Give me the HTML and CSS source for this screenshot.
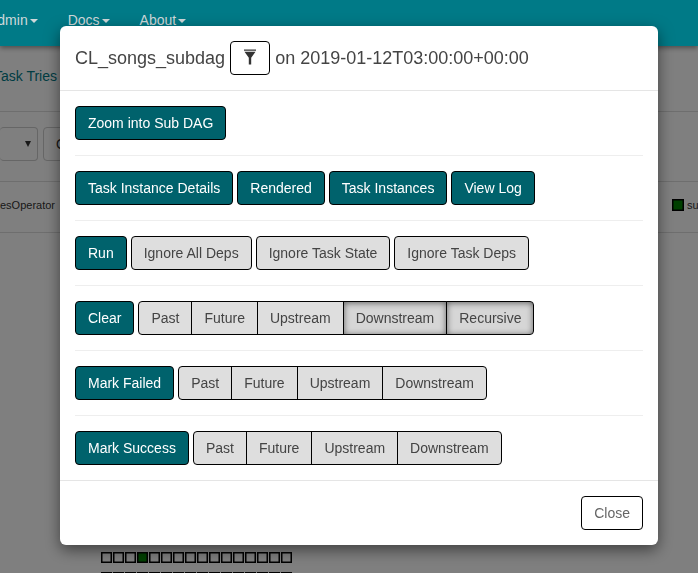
FILE: index.html
```html
<!DOCTYPE html>
<html lang="en-US">

<head>
    <meta charset="UTF-8">
    <meta name="viewport" content="width=device-width, initial-scale=1.0">
    <title>CL_songs_subdag</title>
    <link rel="stylesheet" href="styles.css">
</head>

<body>
    <nav class="navbar">
        <a class="nav-link nav-admin">Admin<span class="caret"></span></a>
        <a class="nav-link">Docs<span class="caret"></span></a>
        <a class="nav-link">About<span class="caret"></span></a>
    </nav>

    <div class="page">
        <div class="tabs"><a class="tab-link">Task Tries</a></div>
        <div class="toolbar">
            <div class="select-box"><span class="select-arrow"></span></div>
            <div class="input-box">O</div>
        </div>
        <div class="legend">
            <span class="operator">esOperator</span>
            <span class="legend-state"><span class="legend-swatch"></span>su</span>
        </div>
        <div class="squares">
            <span class="sq"></span><span class="sq"></span><span class="sq"></span><span class="sq sq-ok"></span><span class="sq"></span><span class="sq"></span><span class="sq"></span><span class="sq"></span><span class="sq"></span><span class="sq"></span><span class="sq"></span><span class="sq"></span><span class="sq"></span><span class="sq"></span><span class="sq"></span><span class="sq"></span>
        </div>
        <div class="squares">
            <span class="sq"></span><span class="sq"></span><span class="sq"></span><span class="sq"></span><span class="sq"></span><span class="sq"></span><span class="sq"></span><span class="sq"></span><span class="sq"></span><span class="sq"></span><span class="sq"></span><span class="sq"></span><span class="sq"></span><span class="sq"></span><span class="sq"></span><span class="sq"></span>
        </div>
    </div>

    <div class="backdrop"></div>

    <div class="modal">
        <div class="modal-header">
            <span>CL_songs_subdag</span>
            <button class="btn btn-filter">
                <svg width="12" height="18" viewBox="0 0 12 18"><path d="M0 .4h12v1.4H0z M.5 2.8h11L7.2 8.8v6.6H4.8V8.8z" fill="#333"/></svg>
            </button>
            <span>on 2019-01-12T03:00:00+00:00</span>
        </div>
        <div class="modal-body">
            <div class="row">
                <button class="btn btn-primary">Zoom into Sub DAG</button>
            </div>
            <hr>
            <div class="row">
                <button class="btn btn-primary">Task Instance Details</button>
                <button class="btn btn-primary">Rendered</button>
                <button class="btn btn-primary">Task Instances</button>
                <button class="btn btn-primary">View Log</button>
            </div>
            <hr>
            <div class="row">
                <button class="btn btn-primary">Run</button>
                <button class="btn btn-grey">Ignore All Deps</button>
                <button class="btn btn-grey">Ignore Task State</button>
                <button class="btn btn-grey">Ignore Task Deps</button>
            </div>
            <hr>
            <div class="row">
                <button class="btn btn-primary">Clear</button>
                <div class="btn-group">
                    <button class="btn btn-grey">Past</button>
                    <button class="btn btn-grey">Future</button>
                    <button class="btn btn-grey">Upstream</button>
                    <button class="btn btn-grey active">Downstream</button>
                    <button class="btn btn-grey active">Recursive</button>
                </div>
            </div>
            <hr>
            <div class="row">
                <button class="btn btn-primary">Mark Failed</button>
                <div class="btn-group">
                    <button class="btn btn-grey">Past</button>
                    <button class="btn btn-grey">Future</button>
                    <button class="btn btn-grey">Upstream</button>
                    <button class="btn btn-grey">Downstream</button>
                </div>
            </div>
            <hr>
            <div class="row">
                <button class="btn btn-primary">Mark Success</button>
                <div class="btn-group">
                    <button class="btn btn-grey">Past</button>
                    <button class="btn btn-grey">Future</button>
                    <button class="btn btn-grey">Upstream</button>
                    <button class="btn btn-grey">Downstream</button>
                </div>
            </div>
        </div>
        <div class="modal-footer">
            <button class="btn btn-close">Close</button>
        </div>
    </div>
</body>

</html>
```

FILE: styles.css
```css
html,
body {
    height: 100%;
}

body {
    margin: 0;
    overflow: hidden;
    background-color: #fff;
    color: #333;
    font-family: "Liberation Sans", Arial, sans-serif;
    font-size: 14px;
}

/* NAV */

.navbar {
    position: relative;
    z-index: 3;
    display: flex;
    height: 46px;
    background-color: #007a87;
    box-shadow: 0 2px 5px rgba(0, 0, 0, 0.4);
}

.nav-link {
    display: block;
    margin-right: 30px;
    padding-top: 13px;
    color: #cfd8da;
    line-height: 14px;
}

.nav-admin {
    margin-left: -12px;
}

.caret {
    display: inline-block;
    margin-left: 2px;
    vertical-align: middle;
    border-top: 4px solid #cfd8da;
    border-right: 4px solid transparent;
    border-left: 4px solid transparent;
}

/* PAGE UNDER THE BACKDROP */

.page {
    height: 527px;
    overflow: hidden;
}

.tabs {
    height: 66px;
    padding-top: 22px;
    box-sizing: border-box;
    border-bottom: 1px solid #ddd;
}

.tab-link {
    margin-left: -6px;
    color: #007a87;
}

.toolbar {
    display: flex;
    gap: 5px;
    height: 70px;
    padding-top: 15px;
    box-sizing: border-box;
    border-bottom: 1px solid #ddd;
}

.select-box {
    display: flex;
    align-items: center;
    justify-content: flex-end;
    width: 38px;
    height: 34px;
    padding-right: 6px;
    box-sizing: border-box;
    border: 1px solid #ccc;
    border-left: none;
    border-radius: 4px;
}

.select-arrow {
    border-top: 6px solid #333;
    border-right: 3px solid transparent;
    border-left: 3px solid transparent;
}

.input-box {
    width: 40px;
    height: 34px;
    padding: 8px 0 0 12px;
    box-sizing: border-box;
    border: 1px solid #ccc;
    border-radius: 4px;
}

.legend {
    display: flex;
    justify-content: space-between;
    height: 51px;
    padding-top: 17px;
    box-sizing: border-box;
    border-bottom: 1px solid #ddd;
    font-size: 11px;
}

.legend-state {
    display: flex;
    gap: 3px;
    width: 26px;
}

.legend-swatch {
    flex: none;
    width: 10px;
    height: 10px;
    border: 1px solid #000;
    background-color: #008000;
    box-shadow: inset 0 0 0 0.5px #000;
}

.squares {
    display: flex;
    gap: 1px;
    height: 12px;
    margin: 0 0 8px 101px;
}

.legend + .squares {
    margin-top: 319px;
}

.sq {
    width: 9px;
    height: 9px;
    border: 1px solid #000;
    background-color: #fff;
    box-shadow: inset 0 0 0 0.5px #000;
}

.sq-ok {
    background-color: #008000;
}

/* MODAL */

.backdrop {
    position: fixed;
    top: 0;
    right: 0;
    bottom: 0;
    left: 0;
    z-index: 4;
    background-color: rgba(0, 0, 0, 0.5);
    clip-path: inset(46px 0 0 0);
}

.modal {
    position: fixed;
    top: 26px;
    left: 60px;
    z-index: 5;
    width: 598px;
    border-radius: 6px;
    background-color: #fff;
    box-shadow: 0 5px 15px rgba(0, 0, 0, 0.5);
}

.modal-header {
    display: flex;
    align-items: center;
    gap: 5px;
    height: 65px;
    padding: 0 15px;
    box-sizing: border-box;
    border-bottom: 1px solid #e5e5e5;
    font-size: 18px;
    color: #444;
}

.modal-body {
    padding: 15px;
}

.modal-footer {
    display: flex;
    justify-content: flex-end;
    padding: 15px;
    border-top: 1px solid #e5e5e5;
}

hr {
    height: 1px;
    margin: 15px 0;
    border: none;
    background-color: #eee;
}

.row {
    display: flex;
    gap: 4px;
}

/* BUTTONS */

.btn {
    height: 34px;
    padding: 6px 12px;
    box-sizing: border-box;
    border: 1px solid #000;
    border-radius: 4px;
    font-family: inherit;
    font-size: 14px;
    line-height: 20px;
    white-space: nowrap;
}

.btn-primary {
    background-color: #00626c;
    color: #fff;
}

.btn-grey {
    background-color: #dedede;
    color: #444;
}

.btn-filter {
    display: flex;
    align-items: center;
    justify-content: center;
    width: 40px;
    background-color: #fff;
}

.btn-close {
    background-color: #fff;
    color: #666;
}

.btn-group {
    display: flex;
}

.btn-group .btn {
    margin-left: -1px;
    border-radius: 0;
}

.btn-group .btn:first-child {
    margin-left: 0;
    border-radius: 4px 0 0 4px;
}

.btn-group .btn:last-child {
    border-radius: 0 4px 4px 0;
}

.btn-grey.active {
    background-color: #d6d6d6;
    box-shadow: inset 0 1px 6px rgba(0, 0, 0, 0.55);
}
```
